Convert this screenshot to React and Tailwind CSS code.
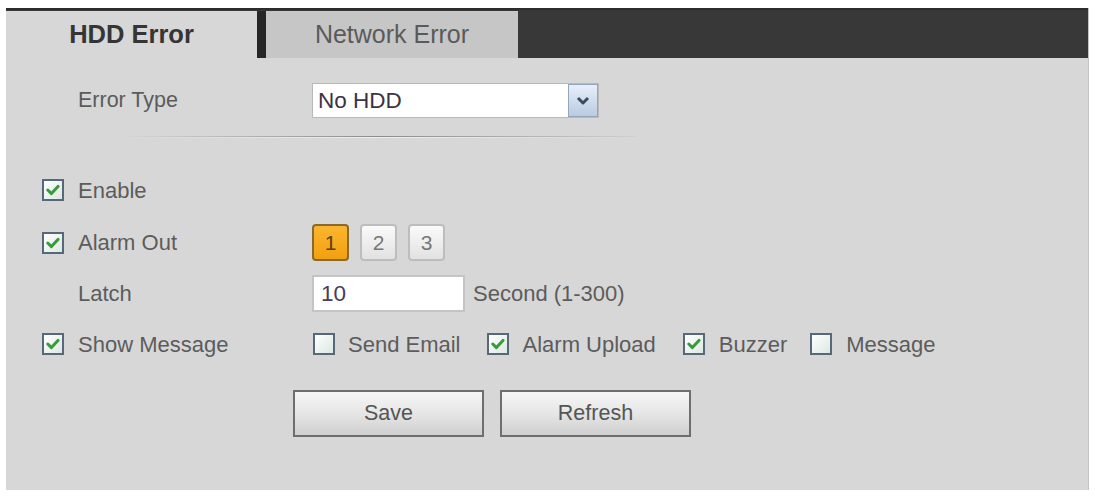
import React from "react";

const FONT = { fontFamily: '"Liberation Sans", Arial, sans-serif' };

// Small checkbox drawn like the old IE/DVR web UI
const Check = ({ checked }) => (
  <div className="w-[22px] h-[22px] border-2 border-[#56687a] bg-gradient-to-br from-white to-[#dbe9e0] flex items-center justify-center shrink-0">
    {checked && (
      <svg width="14" height="12" viewBox="0 0 14 12">
        <path d="M1.8 6 L5.4 9.6 L12 2.4" fill="none" stroke="#3a9a3a" strokeWidth="3" strokeLinecap="round" strokeLinejoin="round" />
      </svg>
    )}
  </div>
);

const NumBox = ({ n, active }) =>
  active ? (
    <div className="w-[37px] h-[37px] rounded-[4px] border-2 border-[#8a6a2a] bg-gradient-to-b from-[#fbb52e] to-[#f2a10c] flex items-center justify-center text-[21px] text-[#5a4010]">
      {n}
    </div>
  ) : (
    <div className="w-[37px] h-[37px] rounded-[4px] border-2 border-[#bdbdbd] bg-gradient-to-b from-[#fafafa] to-[#e2e2e2] flex items-center justify-center text-[21px] text-[#777]">
      {n}
    </div>
  );

const Btn = ({ children }) => (
  <button className="w-[191px] h-[47px] border-2 border-[#6e6e6e] bg-gradient-to-b from-[#f6f6f6] via-[#e6e6e6] to-[#cfcfcf] text-[21.5px] text-[#555] flex items-center justify-center">
    {children}
  </button>
);

export default function App() {
  return (
    <div className="w-[1095px] h-[496px] bg-white pt-[8px] pl-[6px]" style={FONT}>
      <div className="w-[1083px] h-[482px] bg-[#d7d7d7] border-r border-[#c4c4c4] flex flex-col">
        {/* tab bar */}
        <div className="h-[50px] bg-[#383838] border-t-2 border-[#2c2c2c] flex pt-[1px]">
          <div className="w-[251px] h-[47px] bg-[#d7d7d7] flex items-center justify-center text-[25.5px] font-bold text-[#353535]">
            HDD Error
          </div>
          <div className="w-[9px] bg-[#262626]" />
          <div className="w-[252px] h-[47px] bg-[#c6c6c6] flex items-center justify-center text-[25px] text-[#5a5a5a]">
            Network Error
          </div>
        </div>

        {/* form */}
        <div className="pt-[25px] pl-[36px] text-[22px] text-[#5c5c5c]">
          <div className="flex items-center h-[35px]">
            <span className="w-[270px] pl-[36px] text-[21.5px]">Error Type</span>
            <div className="w-[287px] h-[35px] border border-[#b9b9b9] bg-white flex items-center">
              <span className="flex-1 pl-[5px] text-[22.5px] text-[#3c3344]">No HDD</span>
              <div className="w-[30px] h-[33px] border border-[#94a6ba] bg-gradient-to-b from-[#e7eff9] to-[#b9cbe2] flex items-center justify-center">
                <svg width="14" height="10" viewBox="0 0 14 10">
                  <path d="M2 2 L7 7 L12 2" fill="none" stroke="#3c4c60" strokeWidth="3" strokeLinejoin="round" />
                </svg>
              </div>
            </div>
          </div>

          <div className="mt-[18px] ml-[78px] w-[515px] h-[1px] bg-gradient-to-r from-transparent via-[#8c8c8c] to-[#cfcfcf]" />
          <div className="ml-[78px] w-[515px] h-[1px] bg-gradient-to-r from-transparent via-[#eeeeee] to-transparent" />

          <div className="mt-[34px] flex items-center h-[36px]">
            <Check checked />
            <span className="ml-[14px]">Enable</span>
          </div>

          <div className="mt-[16px] flex items-center h-[37px]">
            <div className="w-[270px] flex items-center">
              <Check checked />
              <span className="ml-[14px]">Alarm Out</span>
            </div>
            <div className="flex gap-[11px]">
              <NumBox n="1" active />
              <NumBox n="2" />
              <NumBox n="3" />
            </div>
          </div>

          <div className="mt-[14px] flex items-center h-[37px]">
            <span className="w-[270px] pl-[36px]">Latch</span>
            <div className="w-[153px] h-[37px] border-2 border-[#c4c4c4] bg-white flex items-center pl-[7px] text-[22.5px] text-[#4b3a5c]">
              10
            </div>
            <span className="ml-[8px]">Second (1-300)</span>
          </div>

          <div className="mt-[14px] flex items-center h-[36px]">
            <div className="w-[271px] flex items-center">
              <Check checked />
              <span className="ml-[14px]">Show Message</span>
            </div>
            <Check />
            <span className="ml-[13px]">Send Email</span>
            <div className="ml-[26px]"><Check checked /></div>
            <span className="ml-[14px]">Alarm Upload</span>
            <div className="ml-[27px]"><Check checked /></div>
            <span className="ml-[14px]">Buzzer</span>
            <div className="ml-[23px]"><Check /></div>
            <span className="ml-[14px]">Message</span>
          </div>

          <div className="mt-[28px] ml-[251px] flex gap-[16px]">
            <Btn>Save</Btn>
            <Btn>Refresh</Btn>
          </div>
        </div>
      </div>
    </div>
  );
}
